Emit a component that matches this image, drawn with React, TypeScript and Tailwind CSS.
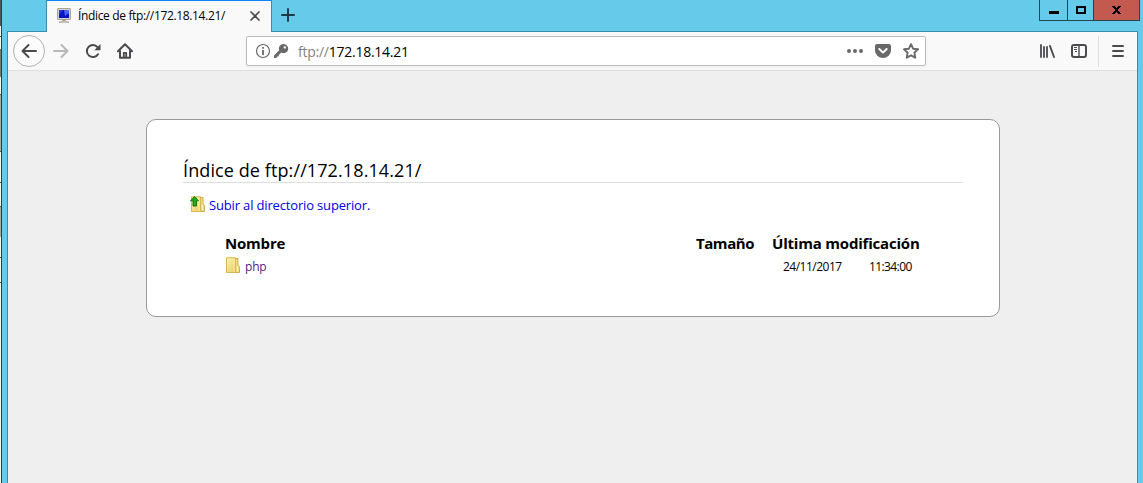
import React from "react";

const Computer = () => (
  <svg width="16" height="16" viewBox="0 0 16 16" className="shrink-0">
    <rect x="1.500" y="0.500" width="13" height="11" rx="0.600" fill="#d6d3c8" stroke="#a5a299" />
    <rect x="3" y="2" width="10" height="8" fill="#0714bd" />
    <path d="M3 2h4l-4 5z" fill="#2839e8" />
    <path d="M8 2h5v3L9 8z" fill="#4d62f5" />
    <path d="M6 12h4v1h2l1.500 2h-11L4 13h2z" fill="#aaa79f" />
    <path d="M4 14h8" stroke="#dddad0" />
  </svg>
);

const Folder = ({ up = false }: { up?: boolean }) => (
  <svg width="16" height="17" viewBox="0 0 16 17" className="shrink-0">
    <defs>
      <linearGradient id="folderFill" x1="0" y1="0" x2="1" y2="1">
        <stop offset="0" stopColor="#fff3b5" />
        <stop offset="1" stopColor="#eac95d" />
      </linearGradient>
    </defs>
    <path d="M9.500 1.500h3.500v7l1.500 1v6h-5z" fill="#f0d983" stroke="#d4b04c" />
    <path d="M12.500 9v5" stroke="#fff7cf" />
    <path d="M1.500 0.800h9v14.700h-9z" fill="url(#folderFill)" stroke="#d9b84f" />
    <path d="M9 2v13" stroke="#fff2b0" />
    {up && <path d="M4.500 0.500 8.500 4.800H6.500V10H3V4.800H0.500z" fill="#1fab1f" stroke="#087508" strokeWidth="0.900" />}
  </svg>
);

const Back = () => (
  <svg width="16" height="16" viewBox="0 0 16 16" fill="none" stroke="currentColor" strokeWidth="2" strokeLinecap="round" strokeLinejoin="round">
    <path d="M15 8H1.500M7.500 2 1.500 8l6 6" />
  </svg>
);
const Forward = () => (
  <svg width="16" height="16" viewBox="0 0 16 16" fill="none" stroke="currentColor" strokeWidth="2" strokeLinecap="round" strokeLinejoin="round">
    <path d="M1 8h13.500M8.500 2l6 6-6 6" />
  </svg>
);
const Reload = () => (
  <svg width="16" height="16" viewBox="0 0 16 16">
    <path d="M13 11.200A6 6 0 1 1 12.500 4.200" fill="none" stroke="currentColor" strokeWidth="2" strokeLinecap="round" />
    <path d="M15.500 1v6.200H9.300z" fill="currentColor" />
  </svg>
);
const Home = () => (
  <svg width="16" height="16" viewBox="0 0 16 16" fill="none" stroke="currentColor" strokeWidth="2" strokeLinecap="round" strokeLinejoin="round">
    <path d="M1 8.200 8 1.200l7 7M3 8v6.800h10V8" />
    <path d="M6.800 14V9.800h2.400V14" strokeWidth="1.800" />
  </svg>
);
const Info = () => (
  <svg width="16" height="16" viewBox="0 0 16 16" fill="none" stroke="currentColor">
    <circle cx="8" cy="8" r="6.500" strokeWidth="1.200" />
    <path d="M8 7v5" strokeWidth="1.800" />
    <path d="M8 4v1.800" strokeWidth="1.800" />
  </svg>
);
const Key = () => (
  <svg width="16" height="16" viewBox="0 0 16 16" fill="currentColor">
    <path fillRule="evenodd" d="M10.300 1a4.600 4.600 0 0 0-4.100 6.300L1 12.600V15h2.600l.4-1.600h1.600L6 11.800l2.300-2.200A4.600 4.600 0 1 0 10.300 1zm1.500 2.200a1.200 1.200 0 1 1 0 2.400 1.200 1.200 0 0 1 0-2.400z" />
  </svg>
);
const Dots = () => (
  <svg width="16" height="16" viewBox="0 0 16 16" fill="currentColor">
    <circle cx="2" cy="8" r="2" /><circle cx="8" cy="8" r="2" /><circle cx="14" cy="8" r="2" />
  </svg>
);
const Pocket = () => (
  <svg width="16" height="16" viewBox="0 0 16 16">
    <path d="M2 1h12a2 2 0 0 1 2 2v4.500a8 7.500 0 0 1-16 0V3a2 2 0 0 1 2-2z" fill="currentColor" />
    <path d="m4.300 6 3.700 3.600L11.700 6" fill="none" stroke="white" strokeWidth="2" strokeLinecap="round" strokeLinejoin="round" />
  </svg>
);
const Star = () => (
  <svg width="16" height="16" viewBox="0 0 16 16" fill="none" stroke="currentColor" strokeWidth="1.900" strokeLinejoin="round">
    <path d="m8 1.200 2.100 4.500 4.900.6-3.600 3.400.9 5L8 12.300l-4.300 2.400.9-5L1 6.300l4.900-.6z" />
  </svg>
);
const Library = () => (
  <svg width="16" height="16" viewBox="0 0 16 16" fill="none" stroke="currentColor" strokeWidth="2" strokeLinecap="round">
    <path d="M2 2v12M5 4v10M8 4v10" strokeWidth="1.800" /><path d="m11 3 4 11" strokeWidth="1.900" />
  </svg>
);
const Sidebar = () => (
  <svg width="16" height="16" viewBox="0 0 16 16" fill="none" stroke="currentColor">
    <rect x="1" y="2" width="14" height="12" rx="2" strokeWidth="2" />
    <path d="M8 2v12" strokeWidth="1.400" /><path d="M3 4.500h3M3 6.500h3M4 8.500h2" />
  </svg>
);

export default function App() {
  return (
    <div className="flex h-[483px] w-[1143px] overflow-hidden bg-[#66caea] font-['Open_Sans','Noto_Sans',sans-serif] text-black">
      <div className="flex w-[2px] shrink-0 flex-col border-r border-[#333b3f] bg-[#f6f6f6]">
        <div className="h-[26px] bg-[#555]" />
        <div className="mt-[10px] h-px bg-[#444]" />
        <div className="mt-[12px] h-[28px] bg-[#777]" />
        <div className="mt-[17px] h-[58px] border-y border-[#555] bg-[#aaa]" />
        <div className="mt-[30px] h-px bg-[#555]" />
        <div className="mt-[23px] h-[31px] border-t border-[#555] bg-[#aaa]" />
        <div className="mt-[20px] h-px bg-[#555]" />
        <div className="mt-[24px] h-px bg-[#555]" />
      </div>
      <div className="flex min-w-0 flex-1 flex-col pl-[5px] pr-[5px]">
        <header className="flex h-[31px] shrink-0 items-start">
          <div className="z-10 ml-[39px] flex h-[32px] w-[226px] items-center border-x border-t-0 border-[#398dac] bg-[#f9f9f9] pl-[9px] shadow-[inset_0_1px_0_#0a84ff]">
            <Computer />
            <span className="ml-[6px] w-[172px] shrink-0 whitespace-nowrap text-[12px] leading-none tracking-[-0.350px]">Índice de ftp://172.18.14.21/</span>
            <svg width="10" height="10" viewBox="0 0 10 10" className="shrink-0 text-[#4a4a4f]"><path d="m1 1 8 8M9 1 1 9" stroke="currentColor" strokeWidth="1.700" strokeLinecap="round" /></svg>
          </div>
          <svg width="14" height="14" viewBox="0 0 14 14" className="ml-[9px] mt-[8px] text-[#1c3944]"><path d="M7 1v12M1 7h12" stroke="currentColor" strokeWidth="1.900" strokeLinecap="round" /></svg>
          <div className="ml-auto mr-[-2px] flex h-[21px] w-[101px] border border-t-0 border-[#234653]">
            <div className="flex w-[28px] items-center justify-center border-r border-[#234653]"><svg width="10" height="3" className="mt-[5px]"><path d="M0 0h10v3H0z" /></svg></div>
            <div className="flex w-[26px] items-center justify-center border-r border-[#234653]"><svg width="10" height="8" viewBox="0 0 10 8" shapeRendering="crispEdges"><path d="M1 1h8v6H1z" fill="none" stroke="black" strokeWidth="2" /></svg></div>
            <div className="flex flex-1 items-center justify-center bg-[#c35a50]"><svg width="9" height="8" viewBox="0 0 9 8" shapeRendering="crispEdges"><path d="M0 0h3v1h1v1h1V1h1V0h3v1H8v1H7v1H6v2h1v1h1v1h1v1H6V7H5V6H4v1H3v1H0V7h1V6h1V5h1V3H2V2H1V1H0z" /></svg></div>
          </div>
        </header>
        <section className="flex min-h-0 flex-1 flex-col border-x border-t border-[#398dac] bg-[#efefef]">
          <nav className="flex h-[39px] shrink-0 items-center border-b border-[#dedede] bg-[#f9f9f9] text-[#4a4a4f]">
            <button className="ml-[5px] flex size-[32px] shrink-0 items-center justify-center rounded-full border border-[#b1b1b1] bg-[#fcfcfc]" aria-label="Atrás"><Back /></button>
            <span className="ml-[8px] text-[#b8b8b9]"><Forward /></span>
            <span className="ml-[16px]"><Reload /></span>
            <span className="ml-[16px]"><Home /></span>
            <div className="ml-[113px] flex h-[30px] w-[680px] items-center rounded-[2px] border border-[#bdbdbd] bg-white pl-[8px] pr-[6px] text-[#69696c] shadow-[0_1px_3px_rgba(0,0,0,0.05)]">
              <Info /><span className="ml-[2px]"><Key /></span>
              <span className="ml-[9px] pt-[2px] text-[14px] leading-none tracking-[-0.250px] text-black"><span className="text-[#858585]">ftp://</span>172.18.14.21</span>
              <span className="ml-auto"><Dots /></span><span className="ml-[12px]"><Pocket /></span><span className="ml-[12px]"><Star /></span>
            </div>
            <span className="ml-[113px]"><Library /></span><span className="ml-[16px]"><Sidebar /></span>
            <span className="ml-[11px] h-[31px] w-px bg-[#dedede]" />
            <svg className="ml-[13px]" width="12" height="12" viewBox="0 0 12 12"><path d="M1 1h10M1 6h10M1 11h10" stroke="currentColor" strokeWidth="1.900" strokeLinecap="round" /></svg>
          </nav>
          <main className="ml-[138px] mt-[48px] flex h-[198px] w-[854px] flex-col rounded-[10px] border border-[#999] bg-white px-[36px] pt-[39px]">
            <h1 className="h-[24px] border-b border-[#dedede] text-[18px] leading-[22px] tracking-[0.100px]">Índice de ftp://172.18.14.21/</h1>
            <a className="ml-[7px] mt-[12px] flex h-[20px] items-center gap-[3px] whitespace-nowrap text-[13px] leading-[20px] tracking-[-0.160px] text-[#0000ee]"><span className="mb-[2px]"><Folder up /></span>Subir al directorio superior.</a>
            <div className="mt-[18px] flex h-[20px] text-[15px] font-bold leading-[20px] tracking-[-0.200px]">
              <span className="ml-[42px] w-[471px]">Nombre</span>
              <span className="w-[76px] tracking-[-0.450px]">Tamaño</span>
              <span className="whitespace-nowrap">Última modificación</span>
            </div>
            <div className="mt-[3px] flex h-[22px] items-center text-[12px] leading-[22px]">
              <a className="ml-[42px] flex w-[558px] items-center gap-[4px] tracking-[-0.200px] text-[#551a8b]"><span className="mb-[3px]"><Folder /></span>php</a>
              <span className="w-[86px] tracking-[-0.500px]">24/11/2017</span><span className="tracking-[-0.600px]">11:34:00</span>
            </div>
          </main>
        </section>
      </div>
    </div>
  );
}
